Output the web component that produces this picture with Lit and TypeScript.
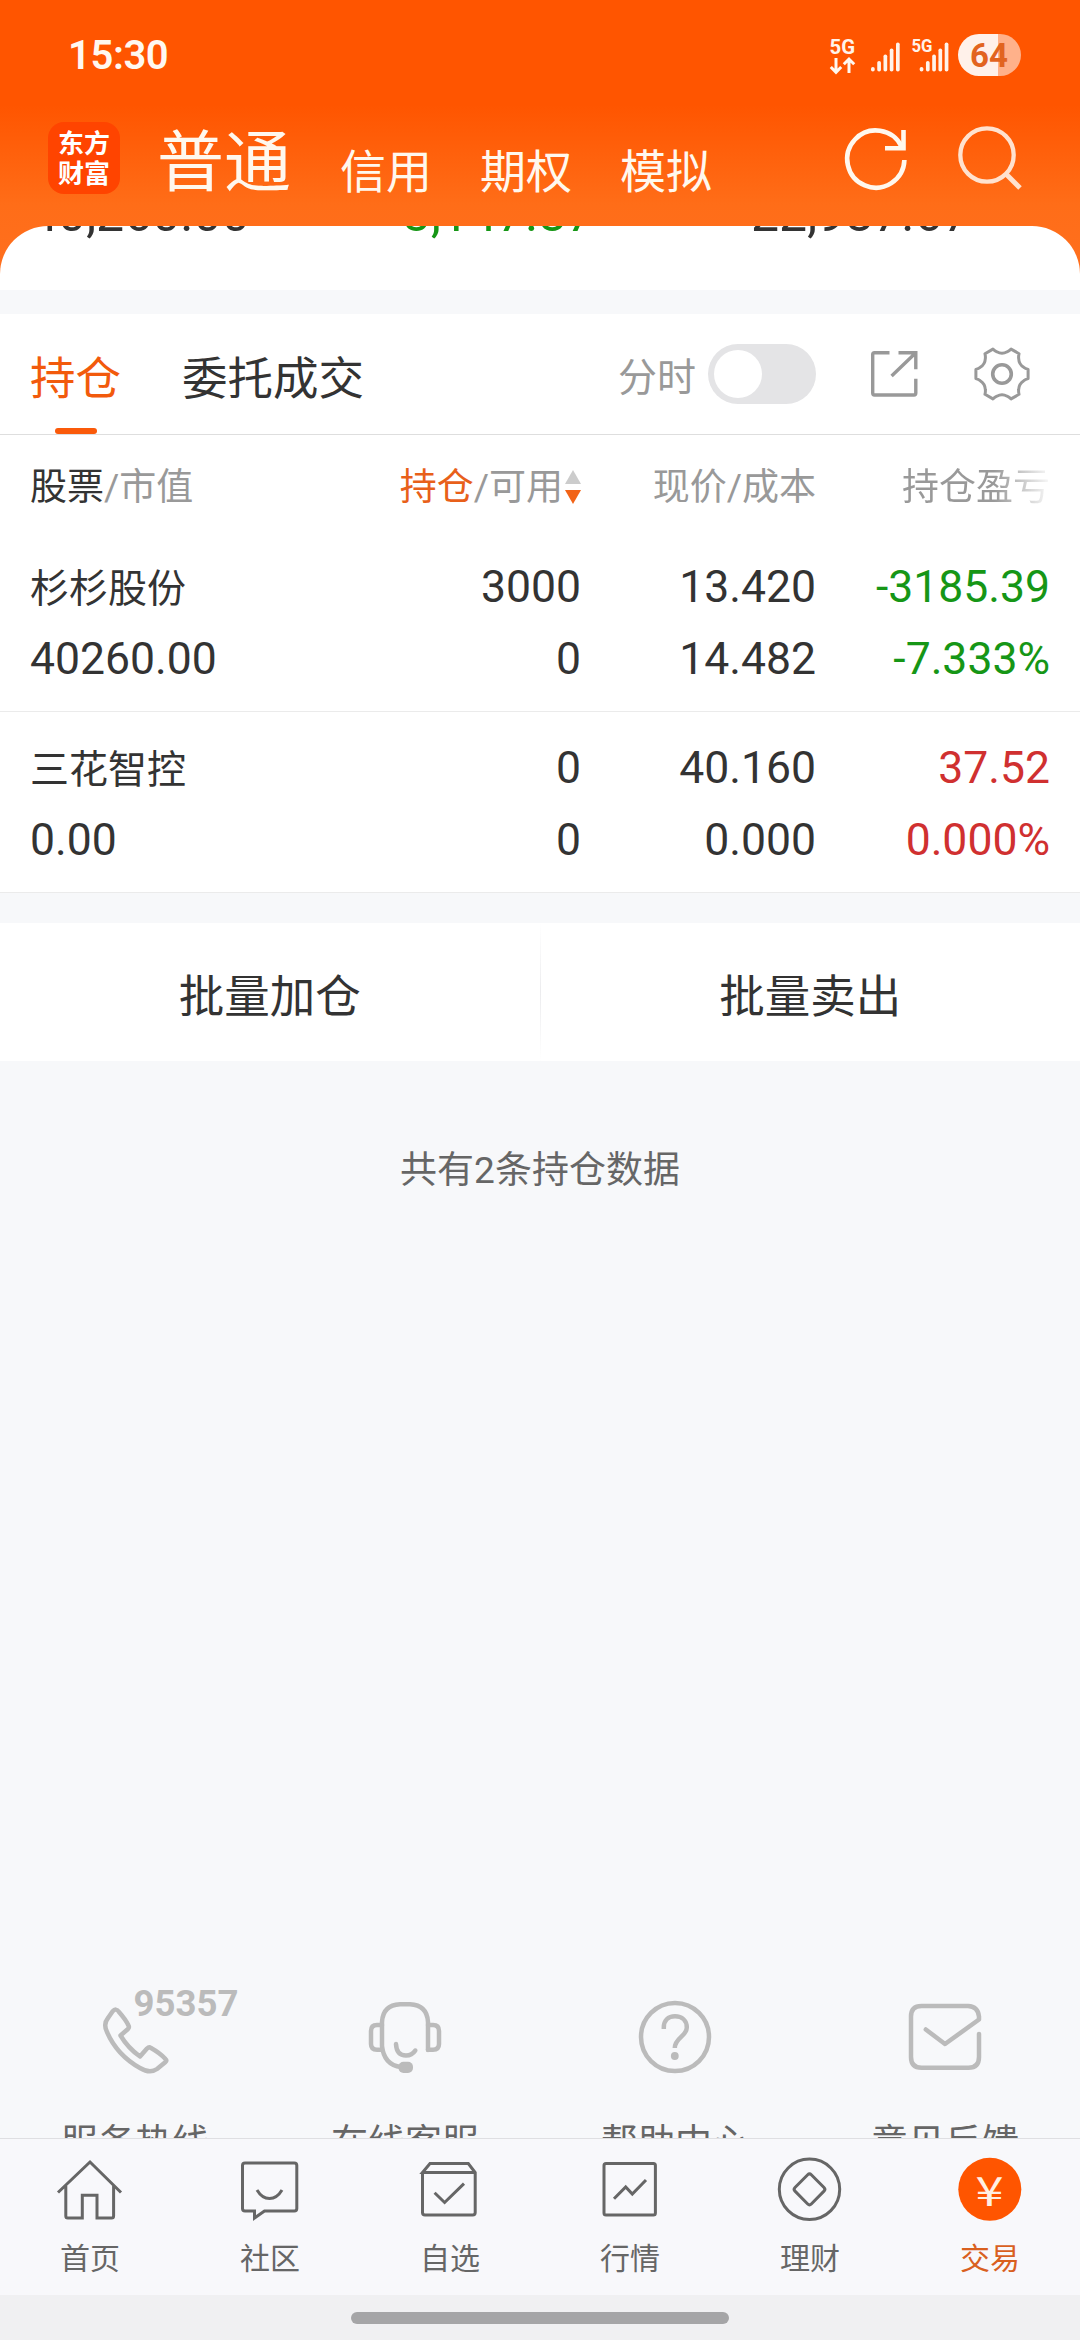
import { LitElement, html, css, svg } from "lit";
import { customElement } from "lit/decorators.js";

type Holding = {
  name: string;
  value: string;
  qty: string;
  avail: string;
  price: string;
  cost: string;
  pl: string;
  rate: string;
  tone: "up" | "down";
};

const holdings: Holding[] = [
  { name: "杉杉股份", value: "40260.00", qty: "3000", avail: "0", price: "13.420", cost: "14.482", pl: "-3185.39", rate: "-7.333%", tone: "down" },
  { name: "三花智控", value: "0.00", qty: "0", avail: "0", price: "40.160", cost: "0.000", pl: "37.52", rate: "0.000%", tone: "up" },
];

// Six-toothed gear outline centred on (30, 30).
const gearPath = (() => {
  const at = (r: number, deg: number) => {
    const a = (deg * Math.PI) / 180;
    return `${(30 + r * Math.cos(a)).toFixed(2)} ${(30 + r * Math.sin(a)).toFixed(2)}`;
  };
  let d = `M${at(26.5, -10)}`;
  for (let k = 0; k < 6; k++) {
    const a = k * 60;
    d += `L${at(26.5, a + 10)}Q${at(24, a + 13)} ${at(22.8, a + 17)}Q${at(19.5, a + 30)} ${at(22.8, a + 43)}Q${at(24, a + 47)} ${at(26.5, a + 50)}`;
  }
  return d + "Z";
})();

const services = [
  {
    label: "服务热线",
    icon: svg`<path d="M22.5 19.5Q26 15.500 29 20Q36 28 38.500 33.500Q39.500 35.500 38 37L30.500 43.500Q38 56 50 64.500L57 56.500Q59 54.500 61 56Q70 61 75.500 67Q77 68.500 75.500 70L67 77Q60 82 50 76Q27 63 17 40Q13 32 18 26Z"/>
      <text class="hotline" x="43.500" y="24" textLength="105" lengthAdjust="spacingAndGlyphs">95357</text>`,
  },
  {
    label: "在线客服",
    icon: svg`<path d="M68 58V30Q67 13 50 12.300H40Q23 13 22 30V54Q24 73 41 75"/>
      <path d="M22 33H17Q11 33 11 39V52Q11 57.700 17 57.700H22M68 33H73Q79 33 79 39V52Q79 57.700 73 57.700H68"/>
      <path d="M36 52Q36.500 63.500 46 63.500Q52 63.500 55.300 58.500"/>
      <rect class="solid" x="38.500" y="69.700" width="14.500" height="11.300" rx="5"/>`,
  },
  {
    label: "帮助中心",
    icon: svg`<circle cx="45" cy="45" r="34"/>
      <path class="butt" d="M33.800 37V35.500C33.800 28.500 38 24.300 45 24.300C52 24.300 56.800 28.500 56.800 35.500C56.800 44.500 44.800 45.500 44.800 56"/>
      <circle class="solid" cx="44.800" cy="64" r="3.900"/>`,
  },
  {
    label: "意见反馈",
    icon: svg`<path d="M79 42V65Q79 75.700 68.500 75.700H21.500Q11 75.700 11 65V24.500Q11 14 21.500 14H68Q78 14.500 79 24.500V27.500L45 52L25.800 37.500"/>`,
  },
];

const navItems = [
  {
    label: "首页",
    active: false,
    icon: svg`<path d="M4 40.500L36 10L67 40.500M11.800 34V64Q11.800 66 13.800 66H28.300V43.300H43V66H57.600Q59.600 66 59.600 64V34"/>`,
  },
  {
    label: "社区",
    active: false,
    icon: svg`<path d="M11 11H60.300Q62.800 11 62.800 13.500V56.500Q62.800 59 60.300 59H30.500L20.500 66V59H11Q8.500 59 8.500 56.500V13.500Q8.500 11 11 11Z"/><path d="M23 38Q28 46.500 35.500 46.500Q43 46.500 48 38"/>`,
  },
  {
    label: "自选",
    active: false,
    icon: svg`<path d="M8.500 20.500V60.500Q8.500 63 11 63H58.700Q61.200 63 61.200 60.500V20.500L54.300 11.500H16L8.500 20.500H61.200"/><path d="M20.600 40.700L30.600 50.500L50 31.700"/>`,
  },
  {
    label: "行情",
    active: false,
    icon: svg`<rect x="10" y="11.500" width="51.400" height="51.500" rx="2"/><path d="M20 46.700L31.700 34.900L38.300 42L52 28"/>`,
  },
  {
    label: "理财",
    active: false,
    icon: svg`<circle cx="35.500" cy="37.300" r="30.200"/><path d="M33.700 22.700Q35.500 20.900 37.300 22.700L50 35.500Q51.800 37.300 50 39.100L37.300 52Q35.500 53.800 33.700 52L21 39.100Q19.200 37.300 21 35.500Z"/>`,
  },
  {
    label: "交易",
    active: true,
    icon: svg`<circle class="coin" cx="35.800" cy="37.300" r="31.500"/><text class="yen" x="21.500" y="54" textLength="28" lengthAdjust="spacingAndGlyphs">¥</text>`,
  },
];

@customElement("app-root")
export class AppRoot extends LitElement {
  static styles = css`
    :host {
      display: block;
      font-family: Roboto, "Noto Sans CJK SC", sans-serif;
      color: #333;
    }
    * { box-sizing: border-box; }
    svg { display: block; fill: none; stroke: currentColor; overflow: visible; }
    .screen {
      width: 1080px;
      height: 2340px;
      display: flex;
      flex-direction: column;
      overflow: hidden;
      background: #f7f8fa;
    }
    .top {
      flex: none;
      background: linear-gradient(#ff5500 105px, #ff6d18 205px, #ff7020 290px);
    }
    .status {
      height: 110px;
      padding: 0 59px 0 68px;
      display: flex;
      justify-content: space-between;
      color: #fff8f0;
    }
    .clock { font-size: 40px; font-weight: 600; line-height: 84px; padding-top: 14px; height: 110px; letter-spacing: -0.400px; }
    .signals { margin-top: 30px; }
    .signals text { stroke: none; font-weight: 700; fill: #fff3ea; }
    .bars { fill: #fff3ea; stroke: none; }
    .lvl-full { fill: #fff1ea; stroke: none; }
    .lvl-rest { fill: #ffb18a; stroke: none; }
    .signals .pct { fill: #e2641f; }
    .head { height: 116px; display: flex; padding: 0 57px 0 48px; color: #fff8ee; }
    .logo {
      width: 72px;
      height: 72px;
      margin-top: 12px;
      border-radius: 16px;
      background: #ff4400;
      color: #fff;
      font: 700 26px/30px "Noto Sans CJK SC", sans-serif;
      text-align: center;
      padding-top: 5px;
    }
    .accounts { display: flex; align-items: baseline; gap: 48px; margin: 15px 0 0 38px; font-size: 46px; height: 80px; line-height: 80px; white-space: nowrap; }
    .accounts .current { font-size: 67px; margin-left: -1px; padding-right: 1px; transform: translateY(-2px); }
    .head-icons { display: flex; gap: 45px; margin: 13px 0 0 auto; }
    .search { color: #ffe2cf; }
    .summary {
      height: 64px;
      border-radius: 48px 48px 0 0;
      background: #fff;
      overflow: hidden;
    }
    .summary-row {
      display: grid;
      grid-template-columns: 359px 362px 1fr;
      padding-left: 30px;
      margin-top: -42px;
      font-size: 50px;
      line-height: 60px;
    }
    .down { color: #169616; }
    .up { color: #d03030; }
    .panel { flex: none; margin-top: 24px; background: #fff; }
    .tabs { height: 121px; border-bottom: 1px solid #dedede; display: flex; padding: 0 48px 0 30px; }
    .tab { font-size: 45.500px; line-height: 60px; padding-top: 36px; height: 120px; display: flex; flex-direction: column; align-items: center; justify-content: space-between; }
    .tab + .tab { margin-left: 61px; }
    .tab.on { color: #f25a0c; }
    .tab.on::after { content: ""; width: 42px; height: 6px; border-radius: 3px; background: #fa5a0a; }
    .tools { margin-left: auto; height: 120px; display: flex; align-items: center; color: #999; }
    .tools-label { font-size: 39px; line-height: 60px; padding-top: 8px; margin-right: 12px; }
    .switch { width: 108px; height: 60px; border-radius: 30px; background: #e4e4e6; padding: 6px; margin-right: 48px; }
    .knob { width: 48px; height: 48px; border-radius: 50%; background: #fff; }
    .gear { margin-left: 48px; }
    .grid { display: grid; grid-template-columns: 270px 281px 235px 234px; padding: 0 30px; text-align: right; white-space: nowrap; }
    .grid > :first-child { text-align: left; }
    .thead { height: 96px; padding-top: 10px; font-size: 37px; line-height: 86px; color: #999; }
    .dark { color: #333; }
    .hot { color: #e8601a; }
    .sorted { display: flex; justify-content: flex-end; align-items: center; gap: 2px; }
    .sort { stroke: none; }
    .asc { fill: #ccc; }
    .desc { fill: #f26316; }
    .fade { background: linear-gradient(90deg, #999 62%, rgba(153, 153, 153, 0.060) 100%); background-size: 147px 100%; background-position: right; background-repeat: no-repeat; -webkit-background-clip: text; background-clip: text; color: transparent; }
    .row { height: 181px; padding-top: 20px; border-bottom: 1px solid #ebebeb; font-size: 44.500px; line-height: 72px; }
    .name { font-size: 39px; line-height: 68px; padding-top: 4px; }
    .batch { flex: none; margin-top: 30px; height: 138px; background: #fff; display: flex; align-items: center; }
    .batch-btn { flex: 1; text-align: center; font-size: 45.500px; line-height: 60px; padding-top: 11px; }
    .batch-sep { width: 1px; height: 138px; background: linear-gradient(#fff, #ececee, #fff); }
    .count { flex: none; margin-top: 80px; text-align: center; font-size: 37px; line-height: 60px; color: #666; }
    .services { margin-top: auto; flex: none; height: 186px; overflow: hidden; display: flex; padding-top: 40px; }
    .service { flex: 1; display: flex; flex-direction: column; align-items: center; font-size: 37px; line-height: 60px; color: #666; gap: 32px; }
    .service svg { flex: none; color: #bbb; stroke-width: 4.500; stroke-linecap: round; stroke-linejoin: round; }
    .hotline { font-size: 37.500px; font-weight: 700; fill: #bbb; stroke: none; }
    .service .solid { fill: #bbb; stroke: none; }
    .service .butt { stroke-linecap: butt; }
    .nav { flex: none; height: 157px; border-top: 1px solid #dfdfe2; background: #f8f8fb; display: flex; padding-top: 13px; }
    .nav-item { flex: 1; display: flex; flex-direction: column; align-items: center; gap: 15px; font-size: 30px; line-height: 40px; color: #666; }
    .nav-item svg { stroke-width: 3; }
    .nav-item.on { color: #d9601f; }
    .coin { fill: #ff5500; stroke: none; }
    .yen { font: 400 41px "Noto Sans CJK SC", sans-serif; fill: #fff0e4; stroke: none; }
    .home { flex: none; height: 45px; background: #f0f0f2; display: flex; justify-content: center; padding-top: 17px; }
    .home-bar { width: 378px; height: 12px; border-radius: 6px; background: #a5a5a7; }
  `;

  private renderStatus() {
    const bars = [0, 1, 2, 3, 4];
    const heights = [4.5, 10.5, 17, 23, 29];
    const signal = (x: number) =>
      bars.map((i) => svg`<rect x=${x + i * 6.25} y=${41.5 - heights[i]} width="3.700" height=${heights[i]} rx="1.800"/>`);
    return html`<div class="status">
      <div class="clock">15:30</div>
      <svg class="signals" width="193" height="50" viewBox="0 0 193 50">
        <text x="1.500" y="24" font-size="21" textLength="25.500" lengthAdjust="spacingAndGlyphs">5G</text>
        <path d="M8 28V42M2.800 37L8 42.300L13.200 37M21 43V29M15.800 34.200L21 29L26.200 34.200" stroke-width="3" />
        <g class="bars">${signal(43)}${signal(91.7)}</g>
        <text x="83.500" y="21.500" font-size="18" textLength="21" lengthAdjust="spacingAndGlyphs">5G</text>
        <path class="lvl-rest" d="M170 4H172A21 21 0 0 1 172 46H170Z" />
        <path class="lvl-full" d="M170 4H151A21 21 0 0 0 151 46H170Z" />
        <text class="pct" x="161" y="36.500" font-size="33" text-anchor="middle">64</text>
      </svg>
    </div>`;
  }

  private renderHead() {
    return html`<div class="head">
      <div class="logo">东方<br />财富</div>
      <div class="accounts">
        <span class="current">普通</span><span>信用</span><span>期权</span><span>模拟</span>
      </div>
      <div class="head-icons">
        <svg width="66" height="70" viewBox="0 0 66 70" stroke-width="4.600">
          <path d="M58.400 37A28.600 28.600 0 1 1 55.500 23.500" />
          <path d="M57.500 7V25.300H39" />
        </svg>
        <svg class="search" width="66" height="70" viewBox="0 0 66 70" stroke-width="4.300">
          <circle cx="30" cy="32" r="26.700" /><path d="M49 51L63 65" stroke-width="5" />
        </svg>
      </div>
    </div>`;
  }

  private renderRow(h: Holding) {
    return html`<div class="grid row">
      <div><div class="name">${h.name}</div><div>${h.value}</div></div>
      <div><div>${h.qty}</div><div>${h.avail}</div></div>
      <div><div>${h.price}</div><div>${h.cost}</div></div>
      <div class=${h.tone}><div>${h.pl}</div><div>${h.rate}</div></div>
    </div>`;
  }

  render() {
    return html`<div class="screen">
      <div class="top">
        ${this.renderStatus()} ${this.renderHead()}
        <div class="summary">
          <div class="summary-row"><span>40,260.00</span><span class="down">-3,147.87</span><span>22,987.67</span></div>
        </div>
      </div>
      <div class="panel">
        <div class="tabs">
          <div class="tab on">持仓</div>
          <div class="tab">委托成交</div>
          <div class="tools">
            <span class="tools-label">分时</span>
            <div class="switch"><div class="knob"></div></div>
            <svg width="60" height="60" viewBox="0 0 60 60" stroke-width="3.400">
              <path d="M25.500 8.800H10.500Q8.700 8.800 8.700 10.600V49Q8.700 51 10.500 51H50Q51.800 51 51.800 49V34.700M34.500 8.800H51.800V25.300M51.800 8.800L27.600 32" />
            </svg>
            <svg class="gear" width="60" height="60" viewBox="0 0 60 60" stroke-width="3">
              <path d=${gearPath} stroke-linejoin="round" /><circle cx="30" cy="30" r="9.300" stroke-width="3.600" />
            </svg>
          </div>
        </div>
        <div class="grid thead">
          <div><span class="dark">股票</span>/市值</div>
          <div class="sorted">
            <span><span class="hot">持仓</span>/可用</span>
            <svg class="sort" width="16" height="86" viewBox="0 0 16 86">
              <path class="asc" d="M8 25L16 39H0Z" /><path class="desc" d="M8 59L16 45H0Z" />
            </svg>
          </div>
          <div>现价/成本</div>
          <div class="fade">持仓盈亏</div>
        </div>
        ${holdings.map((h) => this.renderRow(h))}
      </div>
      <div class="batch">
        <div class="batch-btn">批量加仓</div>
        <div class="batch-sep"></div>
        <div class="batch-btn">批量卖出</div>
      </div>
      <div class="count">共有2条持仓数据</div>
      <div class="services">
        ${services.map((s) => html`<div class="service"><svg width="90" height="90" viewBox="0 0 90 90">${s.icon}</svg>${s.label}</div>`)}
      </div>
      <div class="nav">
        ${navItems.map((n) => html`<div class="nav-item ${n.active ? "on" : ""}"><svg width="72" height="72" viewBox="0 0 72 72">${n.icon}</svg>${n.label}</div>`)}
      </div>
      <div class="home"><div class="home-bar"></div></div>
    </div>`;
  }
}
